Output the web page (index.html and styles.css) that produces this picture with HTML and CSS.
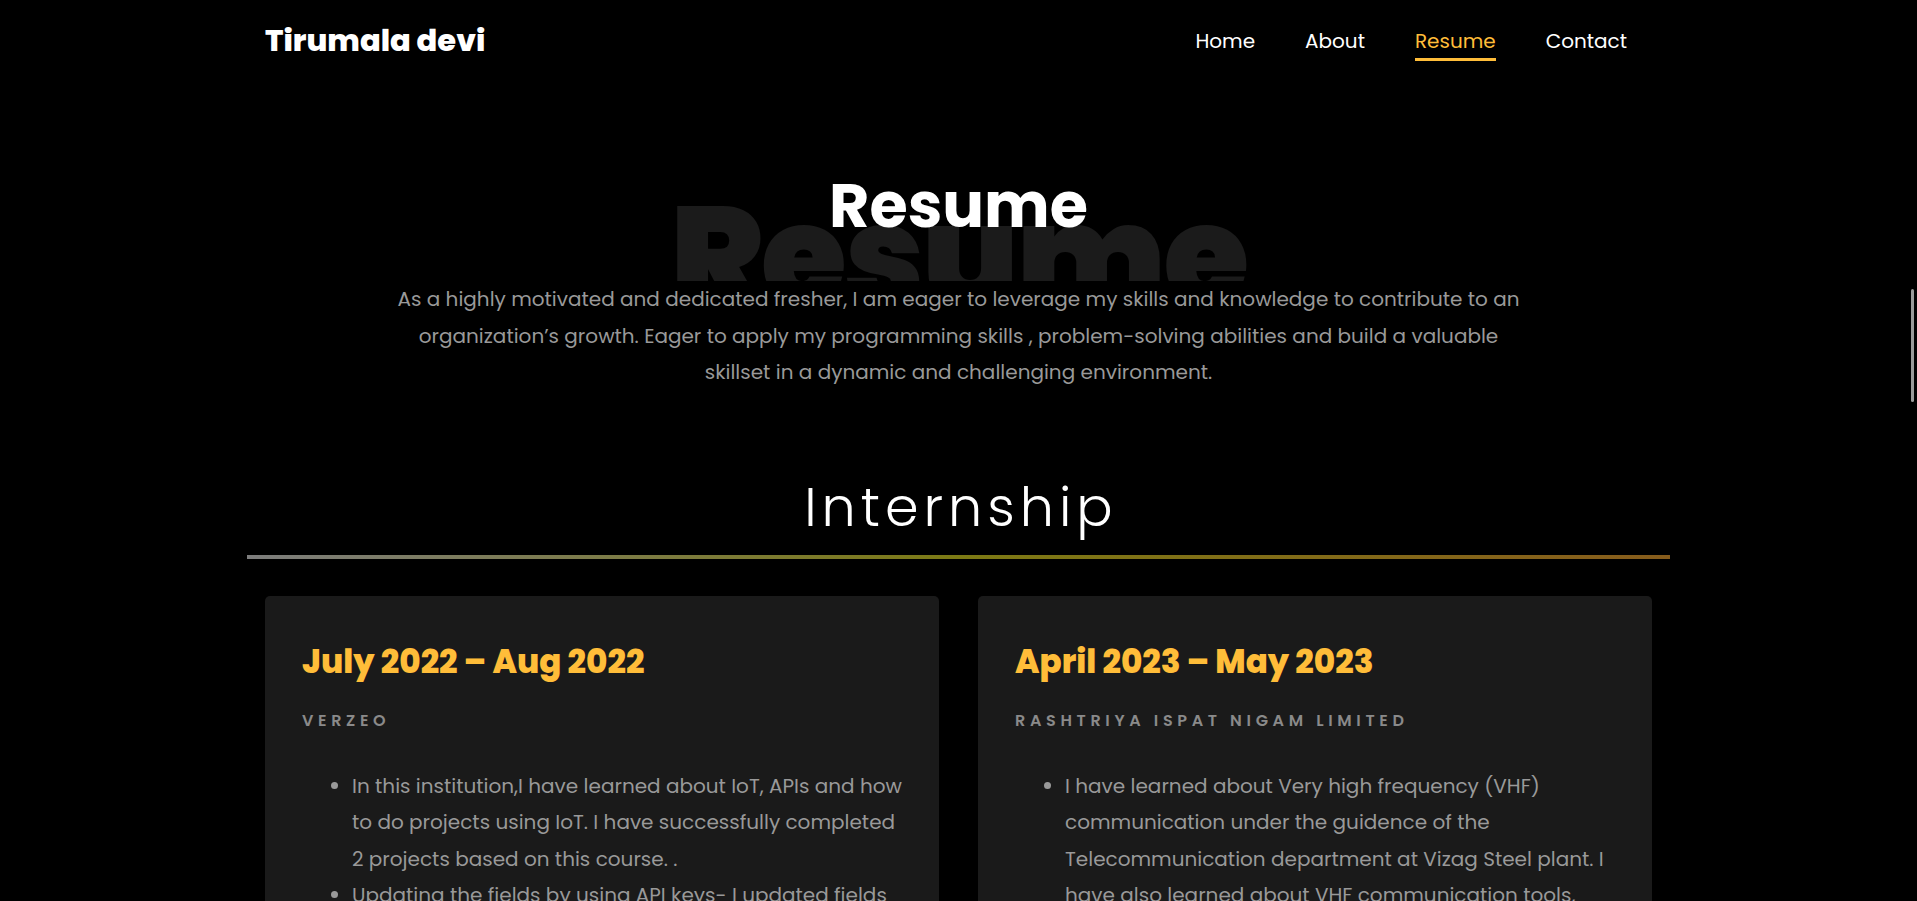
FILE: index.html
```html
<!DOCTYPE html>
<html lang="en">
<head>
<meta charset="utf-8">
<title>Tirumala devi - Resume</title>
<link rel="stylesheet" href="styles.css">
</head>
<body>
<header class="site-header">
  <div class="header-inner">
    <a class="brand" href="#">Tirumala devi</a>
    <nav class="nav">
      <a class="nav-link" href="#">Home</a>
      <a class="nav-link" href="#">About</a>
      <a class="nav-link active" href="#">Resume</a>
      <a class="nav-link" href="#">Contact</a>
    </nav>
  </div>
</header>
<main class="resume">
  <div class="heading">
    <span class="big" aria-hidden="true">Resume</span>
    <h1 class="title">Resume</h1>
    <p class="intro">As a highly motivated and dedicated fresher, I am eager to leverage my skills and knowledge to contribute to an organization’s growth. Eager to apply my programming skills , problem-solving abilities and build a valuable skillset in a dynamic and challenging environment.</p>
  </div>
  <h2 class="sub">Internship</h2>
  <div class="rule"></div>
  <div class="cards">
    <article class="card">
      <h3 class="date">July 2022 – Aug 2022</h3>
      <span class="position">Verzeo</span>
      <ul class="points">
        <li>In this institution,I have learned about IoT, APIs and how to do projects using IoT. I have successfully completed 2 projects based on this course. .</li>
        <li>Updating the fields by using API keys- I updated fields in the cloud platform by using API keys and sensors.</li>
      </ul>
    </article>
    <article class="card">
      <h3 class="date">April 2023 – May 2023</h3>
      <span class="position">Rashtriya Ispat Nigam Limited</span>
      <ul class="points">
        <li>I have learned about Very high frequency (VHF) communication under the guidence of the Telecommunication department at Vizag Steel plant. I have also learned about VHF communication tools, radios and antennas.</li>
      </ul>
    </article>
  </div>
</main>
<div class="scroll-thumb"></div>
</body>
</html>
```
FILE: styles.css
```css
html, body {
  margin: 0;
  padding: 0;
  height: 100%;
  overflow: hidden;
  background: #000;
}
body {
  font-family: "Poppins", "Inter", sans-serif;
  color: #fff;
}
a { text-decoration: none; }

.site-header {
  height: 80px;
}
.header-inner {
  width: 1387px;
  height: 80px;
  margin: 0 auto;
  display: flex;
  align-items: center;
  justify-content: space-between;
}
.brand {
  color: #fff;
  font-size: 30.5px;
  font-weight: 800;
  line-height: 40px;
  margin-top: 2px;
}
.nav {
  display: flex;
  align-items: center;
}
.nav-link {
  position: relative;
  color: #fff;
  font-size: 20px;
  font-weight: 400;
  padding: 0 25px;
  line-height: 30px;
  margin-top: 1px;
}
.nav-link.active {
  color: #ffbd39;
}
.nav-link.active::after {
  content: "";
  position: absolute;
  left: 25px;
  right: 25px;
  top: 32px;
  height: 3px;
  background: #ffbd39;
}

.resume {
  width: 1387px;
  margin: 0 auto;
}
.heading {
  position: relative;
  margin-top: 86px;
  display: flex;
  flex-direction: column;
  align-items: center;
}
.big {
  position: absolute;
  top: 21px;
  left: 0;
  right: 0;
  text-align: center;
  font-size: 139px;
  line-height: 1;
  font-weight: 900;
  color: #1b1b1b;
  letter-spacing: -2.5px;
}
.title {
  position: relative;
  margin: 0;
  font-size: 62px;
  line-height: 79px;
  font-weight: 700;
  color: #fff;
}
.intro {
  position: relative;
  margin: 36px 0 0;
  max-width: 1150px;
  background: #000;
  text-align: center;
  font-size: 20px;
  line-height: 36.5px;
  color: #999;
}
.sub {
  margin: 84px 0 0;
  padding-left: 5px;
  text-align: center;
  font-size: 54px;
  line-height: 65px;
  font-weight: 300;
  letter-spacing: 5px;
  color: #fff;
}
.rule {
  margin: 15px -18px 0;
  height: 4px;
  background: linear-gradient(to right, #7d7d7d, #7d7a14 50%, #875c1c);
}
.cards {
  margin-top: 37px;
  display: grid;
  grid-template-columns: 1fr 1fr;
  gap: 39px;
}
.card {
  background: #1a1a1a;
  border-radius: 5px;
  padding: 43px 30px 37px 37px;
}
.date {
  margin: 0;
  font-size: 32.5px;
  line-height: 45px;
  font-weight: 800;
  color: #ffbd39;
}
.position {
  display: block;
  margin-top: 26px;
  font-size: 16px;
  line-height: 22px;
  font-weight: 600;
  letter-spacing: 4.65px;
  text-transform: uppercase;
  color: #8a8a8a;
}
.points {
  margin: 36px 0 0;
  padding-left: 50px;
  font-size: 20px;
  line-height: 36.5px;
  color: #999;
}

.scroll-thumb {
  position: fixed;
  right: 3px;
  top: 289px;
  width: 3px;
  height: 113px;
  background: #9a9a9a;
  border-radius: 2px;
}
```
